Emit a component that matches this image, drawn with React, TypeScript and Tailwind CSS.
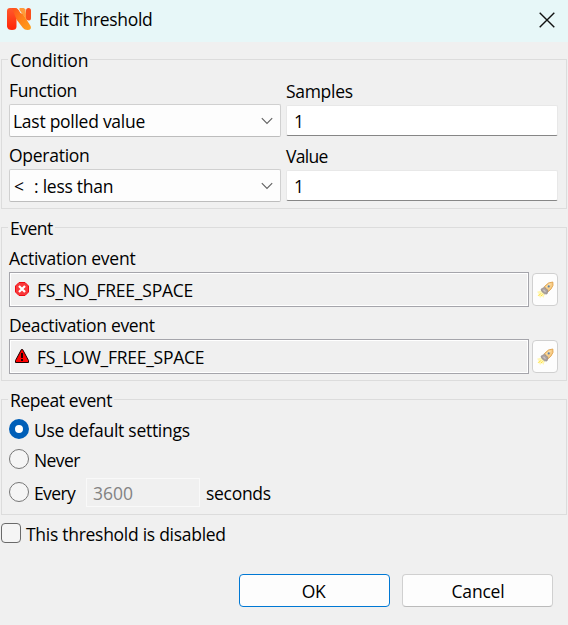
import type { ReactNode } from "react";

function Group({ title, className, spacing, children }: { title: string; className: string; spacing: string; children: ReactNode }) {
  return (
    <section className={`ml-px w-[566px] border border-[#dcdcdc] pl-[7px] ${className}`}>
      <h2 className={`-mt-3 -ml-px w-fit bg-[#f0f0f0] pr-0.5 pl-0.5 ${spacing}`}>{title}</h2>
      {children}
    </section>
  );
}

function Combo({ children }: { children: ReactNode }) {
  return (
    <div className="mt-0.5 flex h-[33px] w-[272px] items-center justify-between rounded-[2px] border border-[#d0d0d0] border-b-[#bdbdbd] bg-[#fdfdfd] pt-px pr-[7px] pl-[3px]">
      <span className="flex whitespace-pre">{children}</span>
      <svg width="12" height="8" viewBox="0 0 12 8" fill="none" stroke="#606060" strokeWidth="1.1">
        <path d="M.8 1.2 6 6.4l5.2-5.2" />
      </svg>
    </div>
  );
}

function Field() {
  return (
    <div className="mt-0.5 flex h-[31px] w-[272px] items-center rounded-[2px] border border-[#e8e8e8] border-b-[#868686] bg-white pt-px pl-[7px]">
      1
    </div>
  );
}

function Rocket() {
  return (
    <svg width="18" height="18" viewBox="0 0 18 18">
      <path d="M1 10.8 5 9.5l4 3-1.5 4.5L6 15 4 17l-.7-1.8L1.4 15l1.4-2z" fill="#fff6b4" />
      <path d="m2.5 14.8 2.5-2.5M5 15l1.6-1.6" stroke="#ffe040" strokeWidth="1" />
      <path d="M8.4 5.6 12.5 2 16.8 1l.2 3.4-2.1 3.8-3.4 3z" fill="#f7cd88" stroke="#dfa04a" strokeWidth=".9" />
      <path d="m10.4 6 4-3.3" stroke="#ffe4ae" strokeWidth="1.3" />
      <path d="M5 8.2 8.4 6.2l3.6 3.2-1 3.6-2.6-.2-2.6-2.4z" fill="#aaa09e" stroke="#8f8886" strokeWidth=".7" />
      <path d="m7.4 8.7 2.1 2" stroke="#cbc5c5" strokeWidth="1.2" />
      <circle cx="12.7" cy="5.4" r="1.1" fill="#5f80a8" />
    </svg>
  );
}

function EventRow({ icon, children }: { icon: ReactNode; children: ReactNode }) {
  return (
    <div className="mt-0.5 flex items-center gap-[3px]">
      <div className="flex h-[35px] w-[520px] items-center gap-2 border border-[#a5a5ab] pl-[5px] inset-ring inset-ring-white">
        <span className="-mt-px">{icon}</span>
        <span>{children}</span>
      </div>
      <button className="flex h-[33px] w-[26px] items-center justify-center rounded-[4px] border border-[#d0d0d0] bg-[#fdfdfd]">
        <Rocket />
      </button>
    </div>
  );
}

function Radio({ checked = false }: { checked?: boolean }) {
  return checked ? (
    <span className="size-5 rounded-full border-[6px] border-[#005fb8] bg-white" />
  ) : (
    <span className="size-5 rounded-full border border-[#767676] bg-[#f5f5f5]" />
  );
}

const errorIcon = (
  <svg width="14" height="14" viewBox="0 0 14 14" className="block">
    <path d="M4 .5h6L13.5 4v6L10 13.5H4L.5 10V4z" fill="#f8383a" stroke="#f00a12" />
    <path d="m4 4 6 6m0-6-6 6" stroke="#fff" strokeWidth="2.2" />
  </svg>
);

const warningIcon = (
  <svg width="14" height="14" viewBox="0 0 14 14" className="block">
    <path d="M6.4.5h1.2l5.9 11v2H.5v-2z" fill="#f00" stroke="#180000" strokeWidth="1" />
    <path d="M7 4v5M7 10v2" stroke="#180000" strokeWidth="1.9" />
  </svg>
);

export default function App() {
  return (
    <main className="flex h-[625px] w-[568px] flex-col bg-[#f0f0f0] font-['Open_Sans','Noto_Sans',sans-serif] text-[17.5px] leading-6 text-black">
      <header className="flex h-[42px] items-start justify-between bg-[#e7f7f8]">
        <div className="flex pt-[7px]">
          <svg width="25" height="24" viewBox="0 0 25 24" className="mt-px ml-[7px]">
            <defs>
              <linearGradient id="left" x1="0" y1="0" x2="0" y2="1">
                <stop stopColor="#ff5a2c" />
                <stop offset="1" stopColor="#ff2408" />
              </linearGradient>
              <linearGradient id="right" x1="0" y1="0" x2="1" y2="1">
                <stop stopColor="#ff4e1c" />
                <stop offset=".5" stopColor="#ff8218" />
                <stop offset="1" stopColor="#ffa01c" />
              </linearGradient>
            </defs>
            <path d="M0 3q0-3 3-3h5q2 0 3.2 2L14 8 9.5 11v7.5Q9.5 22 5 22t-5-3.5z" fill="url(#left)" />
            <path d="M5 0h3q2.2 0 3.5 2l2 3L16 6l7.6 12q1.4 4-3.1 4-3 0-4.5-2L9.5 11.5z" fill="url(#right)" />
            <path d="M12.5 0h4q1 0 1.9 1.6L20 12.5 12.5 2z" fill="#ff9a38" />
            <path d="M19 2.5Q19 0 21.5 0T24 2.5v8q0 2-2 2-3 0-3-3z" fill="#f9501c" />
          </svg>
          <h1 className="ml-[7px] tracking-[-0.3px]">Edit Threshold</h1>
        </div>
        <svg width="16" height="16" viewBox="0 0 16 16" className="mt-3 mr-[13px]" stroke="#111" strokeWidth="1.4">
          <path d="m.7.7 14.6 14.6m0-14.6L.7 15.3" />
        </svg>
      </header>

      <Group title="Condition" className="mt-[17px] h-[150px]" spacing="tracking-[-0.1px]">
        <div className="flex gap-[5px]">
          <div className="mt-1.5 flex flex-col">
            <label className="tracking-[-0.35px]">Function</label>
            <Combo><span className="tracking-[-0.27px]">Last polled value</span></Combo>
            <label className="mt-1.5 tracking-[-0.27px]">Operation</label>
            <Combo>
              <span className="w-[21px] pl-px">{"<"}</span>
              <span className="tracking-[-0.25px]">: less than</span>
            </Combo>
          </div>
          <div className="mt-[7px] flex flex-col">
            <label className="tracking-[-0.3px]">Samples</label>
            <Field />
            <label className="mt-2 tracking-[-0.7px]">Value</label>
            <Field />
          </div>
        </div>
      </Group>

      <Group title="Event" className="mt-[18px] h-[154px]" spacing="tracking-[-0.5px]">
        <div className="mt-1.5 tracking-[-0.25px]">Activation event</div>
        <EventRow icon={errorIcon}><span className="tracking-[-0.22px]">FS_NO_FREE_SPACE</span></EventRow>
        <div className="mt-1.5 tracking-[-0.33px]">Deactivation event</div>
        <EventRow icon={warningIcon}><span className="tracking-[-0.27px]">FS_LOW_FREE_SPACE</span></EventRow>
      </Group>

      <Group title="Repeat event" className="mt-[18px] h-[116px]" spacing="tracking-[-0.42px]">
        <label className="mt-1.5 flex h-6 gap-[5px]">
          <span className="mt-px flex"><Radio checked /></span>
          <span className="tracking-[-0.27px]">Use default settings</span>
        </label>
        <label className="mt-1.5 flex h-6 gap-[5px]">
          <span className="mt-px flex"><Radio /></span>
          <span className="tracking-[-0.6px]">Never</span>
        </label>
        <div className="mt-1.5 flex h-[29px]">
          <span className="mt-1 flex"><Radio /></span>
          <span className="mt-[3px] ml-[5px] w-[52px] tracking-[-0.6px]">Every</span>
          <span className="h-[29px] w-[114px] border border-[#f9f9f9] pt-0.5 pl-1.5 text-[#838383]">3600</span>
          <span className="mt-[3px] ml-1.5 tracking-[-0.3px]">seconds</span>
        </div>
      </Group>

      <label className="mt-[7px] ml-px flex h-6 gap-[5px]">
        <span className="mt-px size-5 rounded-[4px] border border-[#6a6a6a] bg-[#f5f5f5]" />
        <span className="tracking-[-0.28px]">This threshold is disabled</span>
      </label>

      <footer className="mt-7 mr-[15px] flex justify-end gap-3">
        <button className="h-[33px] w-[151px] rounded-[4px] border border-[#0078d4] bg-[#fdfdfd] pr-0.5 leading-6 tracking-[-0.3px]">OK</button>
        <button className="h-[33px] w-[151px] rounded-[4px] border border-[#d0d0d0] border-b-[#bbb] bg-[#fdfdfd] pl-px leading-6 tracking-[-0.2px]">Cancel</button>
      </footer>
    </main>
  );
}
